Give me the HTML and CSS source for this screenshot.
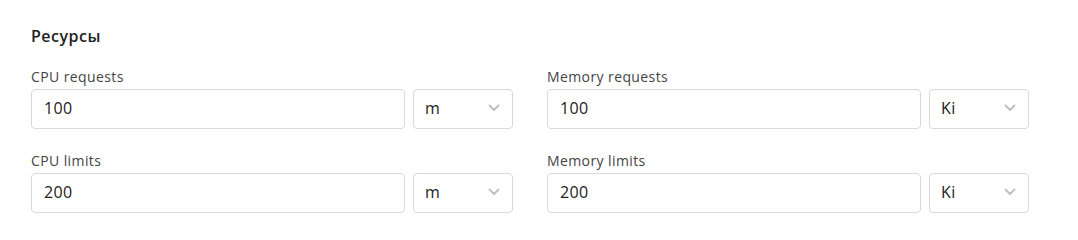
FILE: index.html
```html
<!DOCTYPE html>
<html lang="ru">
<head>
<meta charset="utf-8">
<link rel="stylesheet" href="styles.css">
</head>
<body>
<section class="panel">
  <h2 class="title">Ресурсы</h2>
  <div class="grid">
    <div class="field">
      <label class="label">CPU requests</label>
      <div class="controls">
        <div class="input">100</div>
        <div class="select"><span>m</span><svg class="chev" viewBox="0 0 12 8" width="12" height="8"><path d="M1.5 1.5 L6 6 L10.5 1.5" fill="none" stroke="#bdbdbd" stroke-width="1.8" stroke-linecap="round" stroke-linejoin="round"/></svg></div>
      </div>
    </div>
    <div class="field">
      <label class="label">Memory requests</label>
      <div class="controls">
        <div class="input">100</div>
        <div class="select"><span>Ki</span><svg class="chev" viewBox="0 0 12 8" width="12" height="8"><path d="M1.5 1.5 L6 6 L10.5 1.5" fill="none" stroke="#bdbdbd" stroke-width="1.8" stroke-linecap="round" stroke-linejoin="round"/></svg></div>
      </div>
    </div>
    <div class="field">
      <label class="label">CPU limits</label>
      <div class="controls">
        <div class="input">200</div>
        <div class="select"><span>m</span><svg class="chev" viewBox="0 0 12 8" width="12" height="8"><path d="M1.5 1.5 L6 6 L10.5 1.5" fill="none" stroke="#bdbdbd" stroke-width="1.8" stroke-linecap="round" stroke-linejoin="round"/></svg></div>
      </div>
    </div>
    <div class="field">
      <label class="label">Memory limits</label>
      <div class="controls">
        <div class="input">200</div>
        <div class="select"><span>Ki</span><svg class="chev" viewBox="0 0 12 8" width="12" height="8"><path d="M1.5 1.5 L6 6 L10.5 1.5" fill="none" stroke="#bdbdbd" stroke-width="1.8" stroke-linecap="round" stroke-linejoin="round"/></svg></div>
      </div>
    </div>
  </div>
</section>
</body>
</html>
```

FILE: styles.css
```css
html, body {
  margin: 0;
  padding: 0;
  background: #ffffff;
}
body {
  font-family: "Open Sans", "Noto Sans", sans-serif;
  color: #222222;
}
.panel {
  width: 998px;
  padding: 26px 0 0 31px;
}
.title {
  margin: 0 0 22px 0;
  font-size: 16px;
  line-height: 20px;
  font-weight: 600;
  letter-spacing: 0.5px;
  color: #222222;
}
.grid {
  display: grid;
  grid-template-columns: 482px 482px;
  column-gap: 34px;
  row-gap: 23px;
}
.field {
  display: flex;
  flex-direction: column;
  gap: 3px;
}
.label {
  font-size: 14px;
  line-height: 18px;
  letter-spacing: 0.4px;
  color: #444444;
}
.controls {
  display: flex;
  gap: 8px;
}
.input, .select {
  box-sizing: border-box;
  height: 40px;
  border: 1px solid #d9d9d9;
  border-radius: 4px;
  display: flex;
  align-items: center;
  font-size: 16px;
  letter-spacing: 0.4px;
  color: #222222;
  padding-bottom: 2px;
}
.input {
  flex: 1;
  padding-left: 12px;
}
.select {
  width: 100px;
  padding-left: 11px;
  padding-right: 12px;
  justify-content: space-between;
}
.chev {
  display: block;
}
```
